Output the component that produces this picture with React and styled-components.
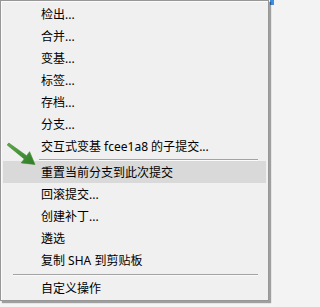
import React from "react";
import styled, { createGlobalStyle } from "styled-components";

const GlobalStyle = createGlobalStyle`
  html, body { margin: 0; padding: 0; }
  body {
    background: #f3f3f3;
    font-family: "Noto Sans", "Noto Sans CJK SC", sans-serif;
    -webkit-font-smoothing: antialiased;
  }
`;

const Stage = styled.div`
  position: relative;
  width: 274px;
  height: 307px;
  overflow: hidden;
  background: #f4f4f4;
`;

const BehindStrip = styled.div`
  position: absolute;
  top: 0;
  right: 0;
  width: 4px;
  height: 5px;
  background: #3d8ee0;
`;

const Menu = styled.div`
  position: absolute;
  top: 0;
  left: 0;
  width: 269px;
  box-sizing: border-box;
  border: 1px solid #979797;
  background: #f0f0f0;
  padding: 2px 2px 1px 2px;
  box-shadow: inset 1px 1px 0 #fbfbfb, 2px 2px 1px rgba(0, 0, 0, 0.35);
  display: flex;
  flex-direction: column;
`;

const Item = styled.div`
  height: 22px;
  display: flex;
  align-items: center;
  padding-left: 38px;
  font-size: 12px;
  color: #000;
  white-space: nowrap;
  background: ${(p) => (p.$active ? "#d9d9d9" : "transparent")};
`;

const Separator = styled.div`
  height: 1px;
  margin: ${(p) => p.$above}px 8px ${(p) => p.$below}px ${(p) => p.$inset}px;
  background: #a3a3a3;
  box-shadow: 0 1px 0 #fafafa;
`;

const Arrow = styled.svg`
  position: absolute;
  left: 0;
  top: 136px;
  width: 44px;
  height: 36px;
  pointer-events: none;
`;

const items1 = ["检出...", "合并...", "变基...", "标签...", "存档...", "分支...", "交互式变基 fcee1a8 的子提交..."];
const items2 = ["重置当前分支到此次提交", "回滚提交...", "创建补丁...", "遴选", "复制 SHA 到剪贴板"];

export default function App() {
  return (
    <>
      <GlobalStyle />
      <Stage>
        <BehindStrip />
        <Menu>
          {items1.map((t) => (
            <Item key={t}>{t}</Item>
          ))}
          <Separator $above={2} $below={1} $inset={36} />
          {items2.map((t, i) => (
            <Item key={t} $active={i === 0}>
              {t}
            </Item>
          ))}
          <Separator $above={3} $below={2} $inset={10} />
          <Item>自定义操作</Item>
        </Menu>
        <Arrow viewBox="0 136 44 36">
          <defs>
            <linearGradient id="g" x1="0" y1="0" x2="1" y2="1">
              <stop offset="0" stopColor="#5fa84c" />
              <stop offset="1" stopColor="#2e7c27" />
            </linearGradient>
          </defs>
          <path
            d="M7.2 145 L24.2 158.9 L21.2 162.9 L35 164.5 L29.6 151.7 L26.6 155.7 L8.8 143 Z"
            fill="url(#g)"
            stroke="#3a8a30"
            strokeWidth="0.6"
            strokeLinejoin="round"
          />
        </Arrow>
      </Stage>
    </>
  );
}
